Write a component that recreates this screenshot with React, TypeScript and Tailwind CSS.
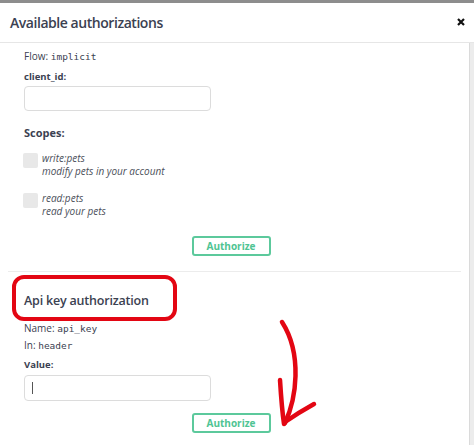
import React from "react";

const sans = { fontFamily: '"Open Sans", "Liberation Sans", sans-serif' };
const mono = { fontFamily: '"DejaVu Sans Mono", monospace' };

const AuthorizeButton: React.FC = () => (
  <div className="flex justify-center pr-[7px]">
    <button className="h-[20px] w-[79px] rounded-[3px] border-2 border-[#5cc99c] text-[10px] font-bold text-[#4fc493] leading-none">
      Authorize
    </button>
  </div>
);

const Scope: React.FC<{ name: string; desc: string; className?: string }> = ({
  name,
  desc,
  className,
}) => (
  <div className={"flex items-start gap-[4px] " + (className ?? "")}>
    <div className="mt-px -ml-px h-[15px] w-[15px] shrink-0 rounded-[2px] bg-[#e8e8e8]" />
    <div className="text-[10px] italic leading-[13px] text-[#4b4f5a]">
      <div>{name}</div>
      <div>{desc}</div>
    </div>
  </div>
);

export default function App() {
  return (
    <div
      className="relative flex h-[445px] w-[474px] flex-col overflow-hidden bg-white text-[#3b4151]"
      style={sans}
    >
      <div className="h-[3px] shrink-0 bg-[#8d8d8d]" />

      {/* header */}
      <div className="flex h-[40px] shrink-0 items-center justify-between border-b border-[#e6e6e6] pl-[10px] pr-[9px]">
        <h2 className="text-[14px] font-semibold tracking-[-0.45px] text-[#3b4151]">
          Available authorizations
        </h2>
        <svg width="8" height="8" viewBox="0 0 8 8" className="mt-[-2px]">
          <path d="M1 1 L7 7 M7 1 L1 7" stroke="#111" strokeWidth="2.2" />
        </svg>
      </div>

      <div className="flex min-h-0 flex-1">
        <div className="min-w-0 flex-1 overflow-hidden">
          {/* oauth2 block */}
          <div className="mx-[8px] border-b border-[#ececec] px-[16px] pb-[15px]">
            <div className="mt-[7px] text-[10px] leading-[12px]">
              Flow: <span style={mono} className="text-[9.5px]">implicit</span>
            </div>
            <div className="mt-[8px] text-[9.5px] font-bold leading-[12px]">client_id:</div>
            <div className="mt-[3px] h-[25px] w-[187px] rounded-[4px] border border-[#dcdcdc]" />
            <div className="mt-[16px] text-[11px] font-bold leading-[12px]">Scopes:</div>
            <Scope className="mt-[13px]" name="write:pets" desc="modify pets in your account" />
            <Scope className="mt-[14px]" name="read:pets" desc="read your pets" />
            <div className="mt-[18px]">
              <AuthorizeButton />
            </div>
          </div>

          {/* api key block */}
          <div className="mx-[8px] px-[16px]">
            <h4 className="mt-[21px] text-[12.5px] font-semibold leading-[16px] tracking-[-0.2px]">
              Api key authorization
            </h4>
            <div className="mt-[13px] text-[10px] leading-[12px]">
              Name: <span style={mono} className="text-[9.5px]">api_key</span>
            </div>
            <div className="mt-[4px] text-[10px] leading-[12px]">
              In: <span style={mono} className="text-[9.5px]">header</span>
            </div>
            <div className="mt-[7px] text-[9.5px] font-bold leading-[12px]">Value:</div>
            <div className="mt-[4px] flex h-[26px] w-[187px] items-center rounded-[4px] border border-[#dcdcdc] pl-[7px]">
              <span className="h-[12px] w-px bg-[#555]" />
            </div>
            <div className="mt-[12px]">
              <AuthorizeButton />
            </div>
          </div>
        </div>
        <div className="w-[5px] shrink-0 border-l border-[#dadada] bg-[#ececec]" />
      </div>

      {/* red annotations */}
      <div className="pointer-events-none absolute left-[12px] top-[275px] h-[46px] w-[165px] rounded-[12px] border-[4px] border-[#e30613]" />
      <svg
        className="pointer-events-none absolute left-0 top-0"
        width="474"
        height="445"
        viewBox="0 0 474 445"
        fill="none"
      >
        <g stroke="#e30613" strokeWidth="4.5" strokeLinecap="round" strokeLinejoin="round">
          <path d="M282 322 C 291 336, 296 355, 295.5 376 C 295 396, 291 410, 285 423" />
          <path d="M280 380 C 281 396, 282 410, 284 424" />
          <path d="M285 422 C 295 415, 305 409, 314 404" />
        </g>
      </svg>
    </div>
  );
}
